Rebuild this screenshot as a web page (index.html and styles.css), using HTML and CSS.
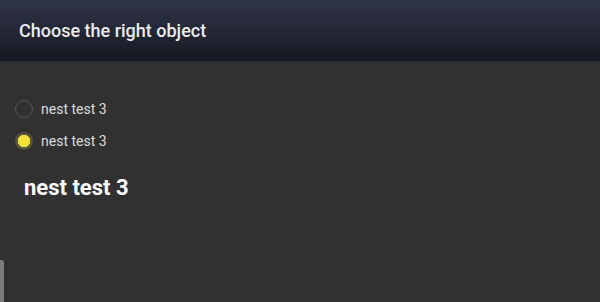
FILE: index.html
```html
<!DOCTYPE html>
<html>
<head>
<meta charset="utf-8">
<link rel="stylesheet" href="styles.css">
</head>
<body>
<div class="app">
  <header class="toolbar">
    <h1 class="title">Choose the right object</h1>
  </header>
  <main class="content">
    <div class="options">
      <label class="option">
        <span class="radio"></span>
        <span class="option-text">nest test 3</span>
      </label>
      <label class="option">
        <span class="radio checked"></span>
        <span class="option-text">nest test 3</span>
      </label>
    </div>
    <div class="answer">nest test 3</div>
  </main>
  <div class="edge-tab"></div>
</div>
</body>
</html>
```

FILE: styles.css
```css
html, body {
  margin: 0;
  padding: 0;
  width: 600px;
  height: 302px;
  overflow: hidden;
  background: #313131;
  font-family: Roboto, "Liberation Sans", sans-serif;
}

.app {
  position: relative;
  width: 600px;
  height: 302px;
  display: flex;
  flex-direction: column;
}

.toolbar {
  height: 62px;
  flex: none;
  background: linear-gradient(to bottom, #2f3447 0%, #232736 50%, #161922 100%);
  border-bottom: 1px solid #22252b;
  display: flex;
  align-items: center;
  padding-left: 19px;
  box-sizing: border-box;
}

.title {
  margin: 0;
  font-size: 18px;
  font-weight: 500;
  color: #ececec;
  padding-bottom: 1px;
}

.content {
  flex: 1;
  padding: 38px 0 0 15px;
}

.options {
  display: flex;
  flex-direction: column;
  gap: 14px;
}

.option {
  display: flex;
  align-items: center;
  gap: 8px;
  height: 18px;
}

.radio {
  width: 18px;
  height: 18px;
  box-sizing: border-box;
  border-radius: 50%;
  border: 1.5px solid #585858;
  flex: none;
  position: relative;
}

.radio.checked {
  border: none;
  background: radial-gradient(circle, #f5e03a 0, #f5e03a 6px, #5c5a3a 6.5px, #4d4c3a 9px);
}

.option-text {
  font-size: 14px;
  color: #dcdcdc;
}

.answer {
  margin: 25px 0 0 9px;
  font-size: 22px;
  font-weight: 700;
  color: #ffffff;
}

.edge-tab {
  position: absolute;
  left: 0;
  top: 260px;
  width: 4px;
  height: 42px;
  background: #7c7c7c;
  border-top-right-radius: 3px;
}
```
